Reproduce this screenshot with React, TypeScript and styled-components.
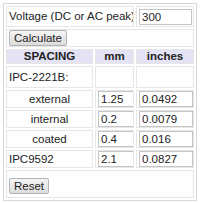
import React from "react";
import styled, { createGlobalStyle } from "styled-components";

const Global = createGlobalStyle`
  html, body { margin: 0; padding: 0; background: #fff; }
  body { font-family: "Liberation Sans", Arial, sans-serif; font-size: 11.5px; color: #222; }
`;

const Table = styled.table`
  margin: 3px;
  width: 194px;
  table-layout: fixed;
  border: 1px solid #d8d8d8;
  border-spacing: 2px;
  font-size: 11.5px;
`;

const Row = styled.tr<{ $h: number }>`
  height: ${(p) => p.$h}px;
`;

const Cell = styled.td<{ $align?: string; $head?: boolean; $top?: number }>`
  border: 1px solid #e6e6e6;
  padding: ${(p) => p.$top || 0}px 1px 0 ${(p) => (p.$align === "center" ? 1 : 2)}px;
  text-align: ${(p) => p.$align || "left"};
  vertical-align: middle;
  font-weight: ${(p) => (p.$head ? "bold" : "normal")};
  background: ${(p) => (p.$head ? "#e3e3f5" : "transparent")};
  white-space: nowrap;
  overflow: hidden;
  line-height: 13px;
`;

const Input = styled.input<{ $w: number }>`
  display: block;
  box-sizing: border-box;
  width: ${(p) => p.$w}px;
  height: 16px;
  margin: 0;
  padding: 0 2px;
  border: 1px solid #c4c4c4;
  font-family: "Liberation Sans", Arial, sans-serif;
  font-size: 11.5px;
  color: #222;
  background: #fff;
`;

const Button = styled.button`
  display: block;
  font-family: "Liberation Sans", Arial, sans-serif;
  font-size: 11.5px;
  color: #222;
  padding: 0 4px;
  height: 16px;
  line-height: 14px;
  border: 1px solid #b4b4b4;
  border-radius: 2px;
  background: linear-gradient(#f4f4f4, #dcdcdc);
`;

const rows = [
  { label: "external", mm: "1.25", inch: "0.0492", center: true },
  { label: "internal", mm: "0.2", inch: "0.0079", center: true },
  { label: "coated", mm: "0.4", inch: "0.016", center: true },
  { label: "IPC9592", mm: "2.1", inch: "0.0827", center: false },
];

export default function App() {
  return (
    <>
      <Global />
      <Table>
        <colgroup>
          <col style={{ width: 87 }} />
          <col style={{ width: 39 }} />
          <col style={{ width: 58 }} />
        </colgroup>
        <tbody>
          <Row $h={21}>
            <Cell colSpan={2}>Voltage (DC or AC peak)</Cell>
            <Cell>
              <Input $w={53} defaultValue="300" />
            </Cell>
          </Row>
          <Row $h={18}>
            <Cell colSpan={3}>
              <Button>Calculate</Button>
            </Cell>
          </Row>
          <Row $h={15}>
            <Cell $head $align="center">SPACING</Cell>
            <Cell $head $align="center">mm</Cell>
            <Cell $head $align="center">inches</Cell>
          </Row>
          <Row $h={22}>
            <Cell>IPC-2221B:</Cell>
            <Cell />
            <Cell />
          </Row>
          {rows.map((r) => (
            <Row $h={18} key={r.label}>
              <Cell $align={r.center ? "center" : "left"}>{r.label}</Cell>
              <Cell>
                <Input $w={36} defaultValue={r.mm} />
              </Cell>
              <Cell>
                <Input $w={54} defaultValue={r.inch} />
              </Cell>
            </Row>
          ))}
          <Row $h={28}>
            <Cell colSpan={3} $top={4}>
              <Button>Reset</Button>
            </Cell>
          </Row>
        </tbody>
      </Table>
    </>
  );
}
